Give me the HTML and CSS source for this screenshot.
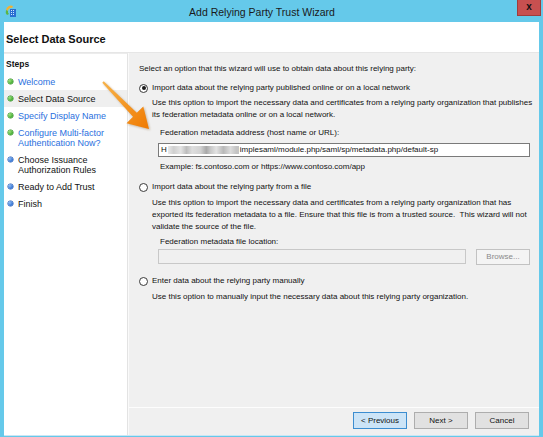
FILE: index.html
```html
<!DOCTYPE html>
<html>
<head>
<meta charset="utf-8">
<link rel="stylesheet" href="styles.css">
</head>
<body>
<div class="window">
  <div class="titlebar">
    <svg class="appicon" width="12" height="13" viewBox="0 0 12 13">
      <path d="M1 5 A5 5 0 0 1 8 1 L7 3 A3 3 0 0 0 3 6 Z" fill="#f2b233"/>
      <path d="M1 5 L3 6 A3 3 0 0 0 4 9 L2 10 A5 5 0 0 1 1 5 Z" fill="#5bb544"/>
      <rect x="5" y="4" width="6" height="8" fill="#2a6fd1"/>
      <path d="M6 5h1v1h-1zM8 5h1v1h-1zM6 7h1v1h-1zM8 7h1v1h-1zM6 9h1v1h-1zM8 9h1v1h-1z" fill="#cfe3ff"/>
    </svg>
    <div class="title">Add Relying Party Trust Wizard</div>
    <div class="close">x</div>
  </div>
  <div class="client">
    <div class="header">Select Data Source</div>
    <div class="main">
      <div class="steps">
        <div class="steps-head">Steps</div>
        <div class="step done link"><span class="dot green"></span><span>Welcome</span></div>
        <div class="step done current"><span class="dot green"></span><span>Select Data Source</span></div>
        <div class="step link"><span class="dot green"></span><span>Specify Display Name</span></div>
        <div class="step link"><span class="dot green"></span><span>Configure Multi-factor<br>Authentication Now?</span></div>
        <div class="step"><span class="dot blue"></span><span>Choose Issuance<br>Authorization Rules</span></div>
        <div class="step"><span class="dot blue"></span><span>Ready to Add Trust</span></div>
        <div class="step"><span class="dot blue"></span><span>Finish</span></div>
      </div>
      <div class="pane">
        <div class="options">
          <div class="intro">Select an option that this wizard will use to obtain data about this relying party:</div>

          <div class="radio-row r1"><span class="radio checked"></span><span>Import data about the relying party published online or on a local network</span></div>
          <div class="desc d1">Use this option to import the necessary data and certificates from a relying party organization that publishes<br>its federation metadata online or on a local network.</div>
          <div class="field-label fl1">Federation metadata address (host name or URL):</div>
          <div class="textbox tb1"><span>H</span><span class="blur"></span><span>implesaml/module.php/saml/sp/metadata.php/default-sp</span></div>
          <div class="example">Example: fs.contoso.com or https://www.contoso.com/app</div>

          <div class="radio-row r2"><span class="radio"></span><span>Import data about the relying party from a file</span></div>
          <div class="desc d2">Use this option to import the necessary data and certificates from a relying party organization that has<br>exported its federation metadata to a file. Ensure that this file is from a trusted source.&nbsp; This wizard will not<br>validate the source of the file.</div>
          <div class="field-label fl2">Federation metadata file location:</div>
          <div class="file-row">
            <div class="textbox disabled"></div>
            <div class="btn browse">Browse...</div>
          </div>

          <div class="radio-row r3"><span class="radio"></span><span>Enter data about the relying party manually</span></div>
          <div class="desc d3">Use this option to manually input the necessary data about this relying party organization.</div>
        </div>
        <div class="footer">
          <div class="btn primary">&lt; Previous</div>
          <div class="btn">Next &gt;</div>
          <div class="btn">Cancel</div>
        </div>
      </div>
    </div>
  </div>
  <svg class="arrow" width="58" height="58" viewBox="0 0 58 58">
    <defs>
      <linearGradient id="ag" x1="0" y1="0" x2="1" y2="1">
        <stop offset="0" stop-color="#f7b34a"/>
        <stop offset="1" stop-color="#f07a00"/>
      </linearGradient>
    </defs>
    <polygon points="5.7,3.3 38.8,34.8 45.3,28.4 51,51 28.5,45.2 35,38.8 4.3,4.7" fill="url(#ag)"/>
  </svg>
</div>
</body>
</html>
```
FILE: styles.css
```css
html, body {
  margin: 0;
  padding: 0;
}
body {
  width: 543px;
  height: 437px;
  overflow: hidden;
  font-family: "Liberation Sans", Arial, sans-serif;
  color: #111;
}
.window {
  position: relative;
  width: 543px;
  height: 437px;
  box-sizing: border-box;
  background: #65c9ea;
  padding: 0 4px 1px 4px;
  display: flex;
  flex-direction: column;
}
.titlebar {
  height: 22px;
  display: flex;
  align-items: center;
  margin: 0 -4px;
}
.appicon {
  margin-left: 5px;
  margin-top: 1px;
}
.title {
  flex: 1;
  text-align: center;
  font-size: 10.5px;
  color: #1a1a1a;
  padding-right: 10px;
  padding-top: 2px;
}
.close {
  width: 24px;
  height: 16px;
  align-self: flex-start;
  margin-right: 2px;
  background: #c75050;
  box-sizing: border-box;
  border: 1px solid #a03c3c;
  border-top: none;
  color: #111;
  font-weight: bold;
  font-size: 10px;
  line-height: 13px;
  text-align: center;
}
.client {
  flex: 1;
  display: flex;
  flex-direction: column;
  background: #fff;
  border-bottom: 1px solid #c9e6f5;
  min-width: 0;
}
.header {
  height: 31px;
  box-sizing: border-box;
  padding: 11px 0 0 2px;
  font-weight: bold;
  font-size: 11px;
  line-height: 12px;
  border-bottom: 1px solid #e6e6e6;
}
.main {
  flex: 1;
  display: flex;
  min-width: 0;
}
.steps {
  flex: none;
  width: 124px;
  box-sizing: border-box;
  background: #fff;
  border-right: 1px solid #e3e3e3;
  border-top: 1px solid #ececec;
}
.steps-head {
  height: 19px;
  box-sizing: border-box;
  padding: 5px 0 0 2px;
  font-weight: bold;
  font-size: 8.5px;
  line-height: 10px;
}
.step {
  display: flex;
  align-items: flex-start;
  padding: 3.5px 0 3.5px 0;
  font-size: 9px;
  line-height: 10px;
  color: #111;
}
.step.link {
  color: #2a6fde;
}
.step.current {
  background: #efefef;
}
.dot {
  width: 5px;
  height: 5px;
  border-radius: 50%;
  margin: 2.5px 5px 0 4px;
  flex: none;
}
.dot.green {
  background: radial-gradient(circle at 35% 35%, #9be27a, #3ea62e 70%);
  box-shadow: 0 0 0 0.5px #2f8a22;
}
.dot.blue {
  background: radial-gradient(circle at 35% 35%, #8fbcf5, #2f6fd0 70%);
  box-shadow: 0 0 0 0.5px #2558ad;
}
.pane {
  flex: 1;
  min-width: 0;
  display: flex;
  flex-direction: column;
  background: #f0f0f0;
  border-left: 1px solid #fafafa;
}
.options {
  flex: 1;
  padding: 10px 9px 0 10px;
  font-size: 8px;
  line-height: 12px;
  white-space: nowrap;
}
.radio-row {
  display: flex;
  align-items: center;
}
.radio {
  width: 9px;
  height: 9px;
  box-sizing: border-box;
  border: 1px solid #3a3a3a;
  border-radius: 50%;
  background: #fff;
  margin-right: 4px;
  position: relative;
  flex: none;
}
.radio.checked::after {
  content: "";
  position: absolute;
  left: 1.5px;
  top: 1.5px;
  width: 4px;
  height: 4px;
  border-radius: 50%;
  background: #1a1a1a;
}
.r1 { margin-top: 7px; }
.desc { padding-left: 13px; }
.d1 { margin-top: 3px; }
.field-label { padding-left: 21px; }
.fl1 { margin-top: 6px; }
.textbox {
  margin-left: 19px;
  height: 14px;
  box-sizing: border-box;
  background: #fff;
  border: 1px solid #7a7a7a;
  display: flex;
  align-items: center;
  padding-left: 2px;
  line-height: 12px;
  white-space: nowrap;
  overflow: hidden;
}
.tb1 { margin-top: 4px; }
.blur {
  display: inline-block;
  width: 71px;
  height: 8px;
  margin: 0 1px;
  background: linear-gradient(90deg, #e9e9e9 0, #cfcfcf 8%, #e4e4e4 18%, #bdbdbd 26%, #dedede 34%, #d2d2d2 46%, #a9a9a9 54%, #c9c9c9 60%, #e3e3e3 68%, #b9b9b9 78%, #dcdcdc 88%, #c4c4c4 96%);
}
.example {
  padding-left: 21px;
  margin-top: 4px;
}
.r2 { margin-top: 8px; }
.d2 { margin-top: 4px; }
.fl2 { margin-top: 3px; }
.file-row {
  display: flex;
  align-items: flex-start;
  margin-top: 1px;
}
.textbox.disabled {
  width: 308px;
  height: 15px;
  background: #f0f0f0;
  border-color: #c8c8c8;
}
.btn {
  width: 54px;
  height: 17px;
  box-sizing: border-box;
  border: 1px solid #adadad;
  background: #e1e1e1;
  font-size: 8px;
  line-height: 15px;
  text-align: center;
  color: #111;
}
.btn.browse {
  margin-left: 10px;
  height: 16px;
  line-height: 14px;
  background: #f4f4f4;
  border-color: #c2c2c2;
  color: #8a8a8a;
}
.r3 { margin-top: 10px; }
.d3 { margin-top: 4px; }
.footer {
  height: 28px;
  box-sizing: border-box;
  border-top: 1px solid #fdfdfd;
  display: flex;
  justify-content: flex-end;
  gap: 7px;
  padding: 4px 10px 0 0;
}
.btn.primary {
  background: #cce4f7;
  border-color: #3c8dd0;
}
.arrow {
  position: absolute;
  left: 98px;
  top: 78px;
  filter: drop-shadow(1px 1px 1px rgba(120, 70, 0, 0.35));
}
```
